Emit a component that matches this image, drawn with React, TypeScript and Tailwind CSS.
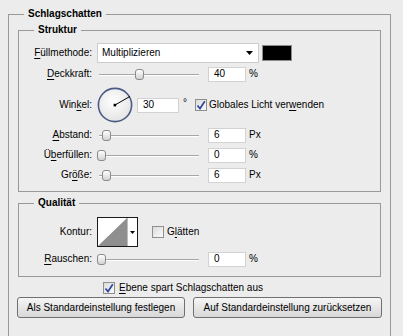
import React from "react";

const CheckBox = ({ checked }: { checked: boolean }) => (
  <span className="flex h-[12px] w-[12px] shrink-0 items-center justify-center border border-[#8e8f8f] bg-linear-to-br from-[#dcdcdc] to-[#fafafa]">
    {checked && (
      <svg width="10" height="10" viewBox="0 0 10 10">
        <path d="M1.5 5.5 L4 8.5 L8.8 1.2" fill="none" stroke="#31479e" strokeWidth="1.7" />
      </svg>
    )}
  </span>
);

const Slider = ({ thumb }: { thumb: number }) => (
  <div className="relative h-[16px] w-[102px] shrink-0">
    <div className="absolute left-[2px] right-0 top-[8px] h-[2px] border-t border-b border-t-[#a6a6a6] border-b-white" />
    <div
      className="absolute top-[3px] h-[11px] w-[9px] rounded-[3px] border border-[#8a8a8a] bg-linear-to-b from-white to-[#d2d2d2]"
      style={{ left: thumb }}
    />
  </div>
);

const Field = ({ value, w = "w-[38px]" }: { value: string; w?: string }) => (
  <div className={`${w} flex h-[15px] items-center border border-[#d2d2d2] bg-white pl-[5px]`}>
    {value}
  </div>
);

const Label = ({ children }: { children: React.ReactNode }) => (
  <div className="w-[74px] shrink-0 pr-[1px] text-right">{children}</div>
);

const U = ({ children }: { children: React.ReactNode }) => (
  <span className="underline underline-offset-[2px]">{children}</span>
);

const SliderRow = ({
  label,
  thumb,
  value,
  unit,
}: {
  label: React.ReactNode;
  thumb: number;
  value: string;
  unit: string;
}) => (
  <div className="mt-[4px] flex h-[16px] items-center">
    <Label>{label}</Label>
    <div className="ml-[4px] flex items-center">
      <Slider thumb={thumb} />
      <div className="ml-[9px]">
        <Field value={value} />
      </div>
      <span className="ml-[3px]">{unit}</span>
    </div>
  </div>
);

export default function App() {
  return (
    <div className="h-[336px] w-[403px] overflow-hidden bg-[#ececec] pl-[8px] pt-[8px] font-['Liberation_Sans',Arial,sans-serif] text-[10px] leading-[12px] text-black">
      <fieldset className="h-[340px] w-[383px] border border-[#999999]">
        <legend className="ml-[15px] px-[4px] font-bold">Schlagschatten</legend>

        {/* Struktur */}
        <fieldset className="mx-[9px] mt-[4px] border border-[#999999] pb-[8px]">
          <legend className="ml-[15px] px-[4px] font-bold">Struktur</legend>

          <div className="mt-[7px] flex h-[20px] items-center">
            <Label>
              <U>F</U>üllmethode:
            </Label>
            <div className="ml-[4px] flex h-[20px] w-[162px] items-center justify-between border border-[#cdcdcd] bg-white pl-[4px] pr-[5px]">
              <span>Multiplizieren</span>
              <svg width="7" height="4" viewBox="0 0 7 4">
                <path d="M0 0 H7 L3.5 4 Z" fill="#000" />
              </svg>
            </div>
            <div className="ml-[3px] h-[16px] w-[30px] border border-[#8c8c8c] bg-black" />
          </div>

          <div className="mt-[3px] flex h-[16px] items-center">
            <Label>
              <U>D</U>eckkraft:
            </Label>
            <div className="ml-[4px] flex items-center">
              <Slider thumb={38} />
              <div className="ml-[9px]">
                <Field value="40" />
              </div>
              <span className="ml-[3px]">%</span>
            </div>
          </div>

          <div className="mt-[5px] flex h-[36px] items-center">
            <Label>
              Win<U>k</U>el:
            </Label>
            <svg className="ml-[4px] shrink-0" width="36" height="36" viewBox="0 0 36 36">
              <defs>
                <radialGradient id="dial" cx="45%" cy="40%" r="60%">
                  <stop offset="0%" stopColor="#ffffff" />
                  <stop offset="100%" stopColor="#e4e4e4" />
                </radialGradient>
              </defs>
              <circle cx="18" cy="18" r="16.6" fill="url(#dial)" stroke="#4b5b83" strokeWidth="1.6" />
              <line x1="18" y1="18" x2="33" y2="9.4" stroke="#000" strokeWidth="1" />
              <rect x="16.6" y="16.8" width="2.6" height="2.6" fill="#000" />
            </svg>
            <div className="ml-[4px]">
              <Field value="30" w="w-[42px]" />
            </div>
            <span className="ml-[4px] self-start pt-[10px]">°</span>
            <div className="ml-[8px] flex items-center">
              <CheckBox checked />
              <span className="ml-[2px]">
                Globales Licht ver<U>w</U>enden
              </span>
            </div>
          </div>

          <SliderRow label={<><U>A</U>bstand:</>} thumb={5} value="6" unit="Px" />
          <SliderRow label={<>Ü<U>b</U>erfüllen:</>} thumb={0} value="0" unit="%" />
          <SliderRow label={<>Gr<U>ö</U>ße:</>} thumb={5} value="6" unit="Px" />
        </fieldset>

        {/* Qualität */}
        <fieldset className="mx-[9px] mt-[5px] border border-[#999999] pb-[9px]">
          <legend className="ml-[15px] px-[4px] font-bold">Qualität</legend>

          <div className="mt-[8px] flex h-[30px] items-center">
            <Label>Kontur:</Label>
            <div className="ml-[4px] flex h-[30px] w-[41px] border border-[#1a1a1a] bg-white">
              <svg width="29" height="28" viewBox="0 0 29 28">
                <path d="M0 28 L29 0 V28 Z" fill="#8f8f8f" />
              </svg>
              <div className="flex flex-1 items-center justify-center border-l border-[#bdbdbd]">
                <svg width="5" height="3" viewBox="0 0 5 3">
                  <path d="M0 0 H5 L2.5 3 Z" fill="#000" />
                </svg>
              </div>
            </div>
            <div className="ml-[14px] flex items-center">
              <CheckBox checked={false} />
              <span className="ml-[3px]">
                G<U>l</U>ätten
              </span>
            </div>
          </div>

          <SliderRow label={<><U>R</U>auschen:</>} thumb={0} value="0" unit="%" />
        </fieldset>

        <div className="mt-[5px] flex h-[12px] items-center pl-[94px]">
          <CheckBox checked />
          <span className="ml-[4px]">
            <U>E</U>bene spart Schlagschatten aus
          </span>
        </div>

        <div className="ml-[8px] mt-[3px] flex gap-[8px]">
          <button className="flex h-[21px] w-[168px] items-center justify-center rounded-[3px] border border-[#707070] bg-linear-to-b from-[#f5f5f5] to-[#d8d8d8]">
            Als Standardeinstellung festlegen
          </button>
          <button className="flex h-[21px] w-[189px] items-center justify-center rounded-[3px] border border-[#707070] bg-linear-to-b from-[#f5f5f5] to-[#d8d8d8]">
            Auf Standardeinstellung zurücksetzen
          </button>
        </div>
      </fieldset>
    </div>
  );
}
